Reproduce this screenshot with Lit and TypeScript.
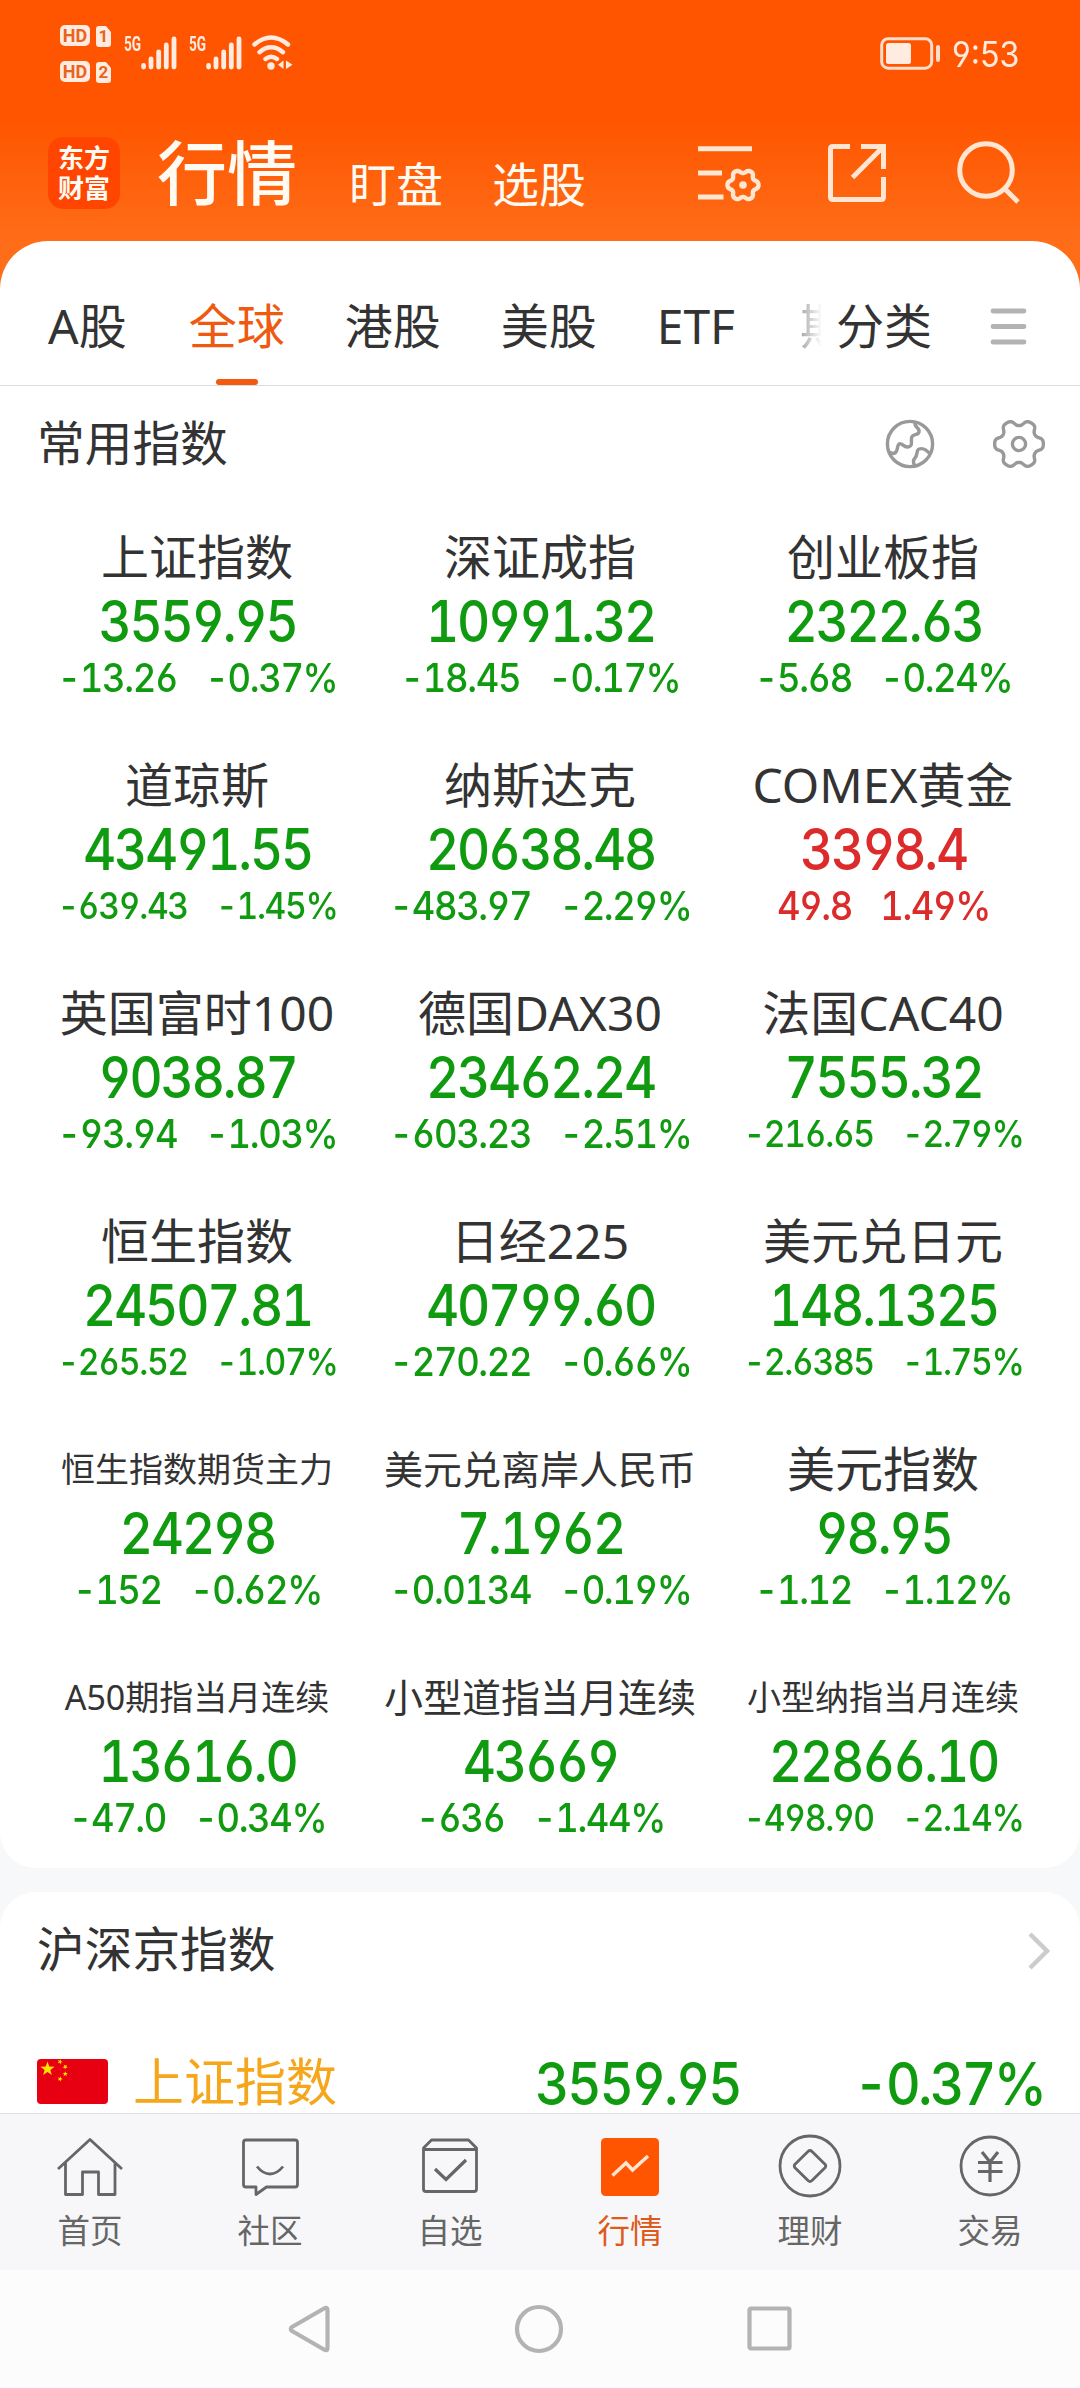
import { LitElement, html, css, svg } from "lit";
import { customElement } from "lit/decorators.js";
import { classMap } from "lit/directives/class-map.js";

interface Quote {
  name: string;
  value: string;
  change: string;
  percent: string;
  fit?: "mid" | "small";
  tight?: boolean;
  up?: boolean;
}

const QUOTES: Quote[] = [
  { name: "上证指数", value: "3559.95", change: "-13.26", percent: "-0.37%" },
  { name: "深证成指", value: "10991.32", change: "-18.45", percent: "-0.17%" },
  { name: "创业板指", value: "2322.63", change: "-5.68", percent: "-0.24%" },
  { name: "道琼斯", value: "43491.55", change: "-639.43", percent: "-1.45%", tight: true },
  { name: "纳斯达克", value: "20638.48", change: "-483.97", percent: "-2.29%" },
  { name: "COMEX黄金", value: "3398.4", change: "49.8", percent: "1.49%", up: true },
  { name: "英国富时100", value: "9038.87", change: "-93.94", percent: "-1.03%" },
  { name: "德国DAX30", value: "23462.24", change: "-603.23", percent: "-2.51%" },
  { name: "法国CAC40", value: "7555.32", change: "-216.65", percent: "-2.79%", tight: true },
  { name: "恒生指数", value: "24507.81", change: "-265.52", percent: "-1.07%", tight: true },
  { name: "日经225", value: "40799.60", change: "-270.22", percent: "-0.66%" },
  { name: "美元兑日元", value: "148.1325", change: "-2.6385", percent: "-1.75%", tight: true },
  { name: "恒生指数期货主力", value: "24298", change: "-152", percent: "-0.62%", fit: "small" },
  { name: "美元兑离岸人民币", value: "7.1962", change: "-0.0134", percent: "-0.19%", fit: "mid" },
  { name: "美元指数", value: "98.95", change: "-1.12", percent: "-1.12%" },
  { name: "A50期指当月连续", value: "13616.0", change: "-47.0", percent: "-0.34%", fit: "small" },
  { name: "小型道指当月连续", value: "43669", change: "-636", percent: "-1.44%", fit: "mid" },
  { name: "小型纳指当月连续", value: "22866.10", change: "-498.90", percent: "-2.14%", fit: "small", tight: true },
];

const star = (cx: number, cy: number, r: number, turn = 0) => {
  const pts = Array.from({ length: 10 }, (_, i) => {
    const a = ((i * 36 - 90 + turn) * Math.PI) / 180;
    const q = i % 2 ? r * 0.4 : r;
    return `${(cx + q * Math.cos(a)).toFixed(2)},${(cy + q * Math.sin(a)).toFixed(2)}`;
  });
  return svg`<polygon fill="#ffe100" points=${pts.join(" ")} />`;
};

/** Outline of a rounded cog: teeth reach r + depth, notches r - depth. */
const cog = (cx: number, cy: number, r: number, depth: number, sharp: number) => {
  const n = 180;
  const pts: string[] = [];
  for (let i = 0; i < n; i++) {
    const a = (i / n) * Math.PI * 2;
    const w = Math.cos(a * 6);
    const q = r + depth * (Math.tanh(w * sharp + 0.3) / Math.tanh(sharp));
    pts.push(`${(cx + q * Math.cos(a)).toFixed(2)} ${(cy + q * Math.sin(a)).toFixed(2)}`);
  }
  return `M${pts.join("L")}Z`;
};

const signal = () => html`<svg class="bars" width="36" height="34" viewBox="0 0 36 34">
  <g stroke="#ffebe0" stroke-width="4.8" stroke-linecap="round">
    <path d="M2.6 29.5V31M10 23V31M17.7 16V31M25.3 9V31M33 3V31" />
  </g>
</svg>`;

@customElement("status-bar")
class StatusBar extends LitElement {
  static styles = css`
    :host { display: flex; height: 110px; box-sizing: border-box; padding: 25px 61px 0 60px; justify-content: space-between; color: #ffebe0; font-family: Roboto, "Liberation Sans", sans-serif; }
    .left, .right { display: flex; align-items: flex-start; }
    .sims { display: grid; grid-template-columns: 30px 15px; column-gap: 6px; row-gap: 14px; }
    .tag { height: 21px; border-radius: 5px; background: #ffebe0; color: #e8641e; text-align: center; font-size: 18px; line-height: 21.5px; font-weight: 700; }
    .card { margin-top: 1px; clip-path: polygon(0 0, 66% 0, 100% 28%, 100% 100%, 0 100%); border-radius: 3px; font-size: 17px; }
    .net { display: flex; margin: 11px 0 0 13px; }
    .net + .net { margin-left: 12px; }
    .gen { width: 17px; font-size: 20px; line-height: 16px; height: 16px; font-weight: 700; }
    .gen span { display: inline-block; transform: scaleX(.68); transform-origin: 0 50%; }
    .bars { display: block; }
    .wifi { margin: 10px 0 0 10px; }
    .battery { margin: 12px 11px 0 0; }
    .time { font-family: Inter, sans-serif; font-feature-settings: "cv03", "cv04"; font-size: 35px; line-height: 42px; margin-top: 8px; width: 67px; white-space: nowrap; }
    .time span { display: inline-block; transform: scaleX(.92); transform-origin: 0 50%; }
  `;
  render() {
    return html`
      <div class="left">
        <div class="sims">
          <div class="tag">HD</div><div class="tag card">1</div>
          <div class="tag">HD</div><div class="tag card">2</div>
        </div>
        <div class="net"><div class="gen"><span>5G</span></div>${signal()}</div>
        <div class="net"><div class="gen"><span>5G</span></div>${signal()}</div>
        <svg class="wifi" width="41" height="35" viewBox="0 0 41 35">
          <g fill="none" stroke="#ffebe0" stroke-width="4.4" stroke-linecap="round">
            <path d="M2.5 9.5Q19 -4.5 36 9.5M7.5 17.2Q19 7.5 31 17.2M13.5 24Q19 19.5 25 24" />
          </g>
          <circle cx="19" cy="31" r="3.7" fill="#ffebe0" />
          <path d="M26 29.7L31.5 25.5V34zM34 25.5V34L40.5 29.7z" fill="#ffebe0" />
        </svg>
      </div>
      <div class="right">
        <svg class="battery" width="61" height="33" viewBox="0 0 61 33">
          <rect x="1.7" y="1.7" width="50" height="29.5" rx="6.5" fill="none" stroke="#ffdccb" stroke-width="3" />
          <rect x="6" y="6" width="25" height="21" rx="2.5" fill="#ffebe0" />
          <rect x="56" y="8" width="4" height="17" rx="2" fill="#ffdccb" />
        </svg>
        <div class="time"><span>9:53</span></div>
      </div>`;
  }
}

@customElement("title-bar")
class TitleBar extends LitElement {
  static styles = css`
    :host { display: flex; height: 131px; box-sizing: border-box; padding: 27px 60px 0 48px; color: #fffaf2; font-family: Roboto, "Noto Sans CJK SC", sans-serif; }
    .logo { width: 72px; height: 72px; border-radius: 15px; background: #ff4500; display: flex; flex-direction: column; align-items: center; justify-content: center; font: 700 26px/30px "Noto Sans CJK SC", sans-serif; padding-bottom: 3px; box-sizing: border-box; }
    .title { font-size: 70px; line-height: 80px; font-weight: 500; margin-left: 37px; margin-top: -1px; }
    .link { font-size: 47px; line-height: 60px; margin: 19px 0 0 52px; }
    .link + .link { margin-left: 49px; }
    .icons { display: flex; margin-left: auto; gap: 67px; }
    .tool { display: block; fill: none; stroke: #ffe6d2; stroke-width: 5; }
    .dot { fill: #ffe6d2; stroke: none; }
  `;
  render() {
    return html`
      <div class="logo"><span>东方</span><span>财富</span></div>
      <div class="title">行情</div>
      <div class="link">盯盘</div>
      <div class="link">选股</div>
      <div class="icons">
        <svg class="tool" width="63" height="70" viewBox="699 137 63 70">
          <path d="M699 148.700H753M699 173H723M699 197H724.500" />
          <path stroke-width="4.400" d=${cog(744, 185, 13.3, 1.9, 0.9)} />
          <circle class="dot" cx="744" cy="185" r="3.800" />
        </svg>
        <svg class="tool" width="58" height="70" viewBox="829 137 58 70">
          <path d="M851 146.500H834Q831.500 146.500 831.500 149V197Q831.500 199.500 834 199.500H882Q884.500 199.500 884.500 197V177M862 146.500H884.500V169M884 147L853.500 177.500" />
        </svg>
        <svg class="tool" width="67" height="70" viewBox="954 137 67 70">
          <circle cx="987" cy="170" r="26.300" /><path d="M1005.500 188.500L1019 202" />
        </svg>
      </div>`;
  }
}

@customElement("market-tabs")
class MarketTabs extends LitElement {
  static styles = css`
    :host { display: flex; height: 145px; box-sizing: border-box; border-bottom: 1px solid #dcdcdc; padding: 0 53px 0 48px; color: #333; font: 48px/60px "Noto Sans", "Noto Sans CJK SC", sans-serif; }
    .tab { padding-top: 55px; margin-right: 60px; white-space: nowrap; display: flex; flex-direction: column; align-items: center; justify-content: space-between; }
    .tab:first-child { margin-right: 62px; }
    .on { color: #ee5a0f; }
    .on::after { content: ""; width: 42px; height: 6px; border-radius: 3px; background: #f3590f; }
    .cut { width: 22px; overflow: hidden; display: block; margin: 0 0 0 5px; color: #888; -webkit-mask-image: linear-gradient(90deg, rgba(0,0,0,.75), transparent); mask-image: linear-gradient(90deg, rgba(0,0,0,.75), transparent); }
    .all { margin: 0 0 0 14px; }
    .menu { margin: 67px 0 0 auto; }
  `;
  render() {
    return html`
      <div class="tab">A股</div>
      <div class="tab on">全球</div>
      <div class="tab">港股</div>
      <div class="tab">美股</div>
      <div class="tab">ETF</div>
      <div class="tab cut">期</div>
      <div class="tab all">分类</div>
      <svg class="menu" width="37" height="38" viewBox="0 0 37 38">
        <path d="M3 3H34M3 18.500H34M3 34H34" stroke="#b3b3b3" stroke-width="4.800" stroke-linecap="round" />
      </svg>`;
  }
}

@customElement("quote-grid")
class QuoteGrid extends LitElement {
  static styles = css`
    :host { display: grid; grid-template-columns: repeat(3, 343px); justify-content: center; row-gap: 50px; padding: 23px 0; text-align: center; }
    .name { font-family: "Noto Sans", "Noto Sans CJK SC", sans-serif; font-size: 48px; line-height: 60px; padding-bottom: 4px; color: #333; white-space: nowrap; }
    .mid { font-size: 39px; }
    .small { font-size: 34px; }
    .down { color: #109a10; }
    .up { color: #dc2b2b; }
    .value, .delta { font-family: Inter, sans-serif; font-feature-settings: "tnum", "cv03", "cv04"; font-weight: 450; white-space: nowrap; }
    .value { font-size: 57px; line-height: 61px; margin-bottom: -1px; letter-spacing: -2.4px; transform: scaleX(.9); }
    .delta { display: flex; justify-content: center; gap: 31px; font-size: 40px; line-height: 54px; letter-spacing: -1.5px; transform: scaleX(.91); }
    .tight { font-size: 37px; }
  `;
  render() {
    return QUOTES.map((q) => html`
      <div class="cell">
        <div class=${classMap({ name: true, mid: q.fit === "mid", small: q.fit === "small" })}>${q.name}</div>
        <div class=${classMap({ value: true, up: !!q.up, down: !q.up })}>${q.value}</div>
        <div class=${classMap({ delta: true, tight: !!q.tight, up: !!q.up, down: !q.up })}>
          <span>${q.change}</span><span>${q.percent}</span>
        </div>
      </div>`);
  }
}

@customElement("tab-bar")
class TabBar extends LitElement {
  static styles = css`
    :host { display: grid; grid-template-columns: repeat(6, 1fr); height: 157px; box-sizing: border-box; border-top: 1px solid #dedfe1; background: #f7f7f9; color: #666; font: 32.5px/40px Roboto, "Noto Sans CJK SC", sans-serif; }
    .item { display: flex; flex-direction: column; align-items: center; padding-top: 16px; gap: 12px; }
    .glyph { display: block; fill: none; stroke: #666; stroke-width: 2.8; stroke-linejoin: round; }
    .active { color: #dd5a1a; }
  `;
  render() {
    const item = (label: string, shape: unknown, active = false) => html`
      <div class="item ${active ? "active" : ""}">
        <svg class="glyph" width="70" height="70" viewBox="0 0 70 70">${shape}</svg>
        <span>${label}</span>
      </div>`;
    return html`
      ${item("首页", svg`<path d="M3 39L35 9.500L67 39M10.500 33V64.500H27.500V42H43.500V64.500H60V33" />`)}
      ${item("社区", svg`<path d="M11 10H60Q62.500 10 62.500 12.500V54.500Q62.500 57 60 57H31.500L21 64.500V57H11Q8.500 57 8.500 54.500V12.500Q8.500 10 11 10ZM22 36.500Q28 44 35 44T48 36.500" />`)}
      ${item("自选", svg`<path d="M16.500 10H53.500L61.500 18V59Q61.500 61.500 59 61.500H11Q8.500 61.500 8.500 59V18ZM8.500 19.500H61.500" /><path stroke-width="3.200" stroke-linejoin="miter" d="M20 39L31 49.500L51 30" />`)}
      ${item("行情", svg`<rect x="6" y="8" width="58" height="58" rx="4.500" fill="#ff5500" stroke="none" /><path stroke="#ffe6d2" stroke-width="3.400" stroke-linejoin="miter" d="M17.500 45.500L31 33L37.500 40L53 26" />`, true)}
      ${item("理财", svg`<circle cx="35" cy="36" r="30" /><path d="M33 21.500Q35 19.500 37 21.500L50 34.200Q51.500 36 50 37.800L37 50.500Q35 52.500 33 50.500L20 37.800Q18.500 36 20 34.200Z" />`)}
      ${item("交易", svg`<circle cx="35" cy="36" r="29" /><path stroke-width="3.200" d="M27 22L35 32L43 22M23 32.500H47.500M23 41.500H47.500M35 32V52" />`)}`;
  }
}

@customElement("app-root")
class AppRoot extends LitElement {
  static styles = css`
    :host { display: flex; flex-direction: column; width: 1080px; height: 2388px; overflow: hidden; background: #f7f8fa; font-family: Roboto, "Noto Sans CJK SC", sans-serif; color: #333; }
    .top { flex: none; height: 300px; margin-bottom: -59px; background: linear-gradient(#ff5500 118px, #ff6d18 241px); }
    .sheet { flex: none; height: 1627px; box-sizing: border-box; background: #fff; border-radius: 48px 48px 36px 36px; }
    .head { display: flex; align-items: center; justify-content: space-between; height: 118px; padding: 0 35px 0 37px; font-size: 47.7px; line-height: 60px; }
    .acts { display: flex; gap: 58px; padding-bottom: 3px; }
    .act { display: block; fill: none; stroke: #999; stroke-width: 3.400; }
    .list { flex: 1; min-height: 0; overflow: hidden; margin-top: 24px; background: #fff; border-radius: 36px 36px 0 0; }
    .list .head { padding: 0 30px 0 37px; }
    .row { display: flex; align-items: center; padding: 46px 36px 0 37px; height: 56px; font: 450 59px/56px Inter, sans-serif; font-feature-settings: "tnum", "cv03", "cv04"; letter-spacing: -2.4px; color: #109a10; }
    .flag { margin-top: -5px; }
    .label { font: 51px/56px Roboto, "Noto Sans CJK SC", sans-serif; letter-spacing: 0; color: #f5a61a; margin-left: 25px; width: 402px; }
    .price { transform: scaleX(.9); transform-origin: 0 50%; }
    .pct { margin-left: auto; letter-spacing: -3px; transform: scaleX(.91); transform-origin: 100% 50%; }
    .nav { flex: none; height: 118px; background: #fcfcfc; display: flex; justify-content: space-between; align-items: center; padding: 0 288px; box-sizing: border-box; }
    .key { display: block; fill: none; stroke: #b3b3b3; stroke-width: 4.200; stroke-linejoin: round; }
  `;
  render() {
    return html`
      <div class="top"><status-bar></status-bar><title-bar></title-bar></div>
      <div class="sheet">
        <market-tabs></market-tabs>
        <div class="head">
          <span>常用指数</span>
          <div class="acts">
            <svg class="act" width="50" height="50" viewBox="0 0 50 50">
              <circle cx="25" cy="25" r="22.600" />
              <path d="M30 3.500C29 8 35 9 34 13C33 17 27 14 26.500 19C26 24 28 27 23 28C18 28.500 17 23 14 25C11 28 14 34 8 34.500L4 33M45 35C41 30 37 29 34 30C31 31 33 36 30 39C28 41 28 44 30 47" />
            </svg>
            <svg class="act" width="52" height="50" viewBox="0 0 52 50">
              <path d=${cog(26, 25, 21.2, 3, 1.5)} />
              <circle cx="26" cy="25" r="6.600" />
            </svg>
          </div>
        </div>
        <quote-grid></quote-grid>
      </div>
      <div class="list">
        <div class="head">
          <span>沪深京指数</span>
          <svg class="act" width="22" height="38" viewBox="0 0 22 38"><path d="M2 2L19 19L2 36" stroke="#ccc" stroke-width="4.500" /></svg>
        </div>
        <div class="row">
          <svg class="flag" width="71" height="45" viewBox="0 0 71 45">
            <rect width="71" height="45" rx="4" fill="#e60012" />
            ${star(10.5, 10, 7.5)}${star(23, 2.8, 2.8, 20)}${star(28.2, 7.8, 2.8, 40)}${star(28.2, 15, 2.8)}${star(23, 20, 2.8, 20)}
          </svg>
          <span class="label">上证指数</span>
          <span class="price">3559.95</span>
          <span class="pct">-0.37%</span>
        </div>
      </div>
      <tab-bar></tab-bar>
      <div class="nav">
        <svg class="key" width="42" height="50" viewBox="0 0 42 50"><path d="M36 4.500Q39.500 2.500 39.500 6V44Q39.500 47.500 36 45.500L4 27Q1.500 25 4 23Z" /></svg>
        <svg class="key" width="50" height="50" viewBox="0 0 50 50"><circle cx="25" cy="25" r="22" /></svg>
        <svg class="key" width="45" height="50" viewBox="0 0 45 50"><rect x="2.500" y="4.500" width="40" height="40" rx="1.500" /></svg>
      </div>`;
  }
}
